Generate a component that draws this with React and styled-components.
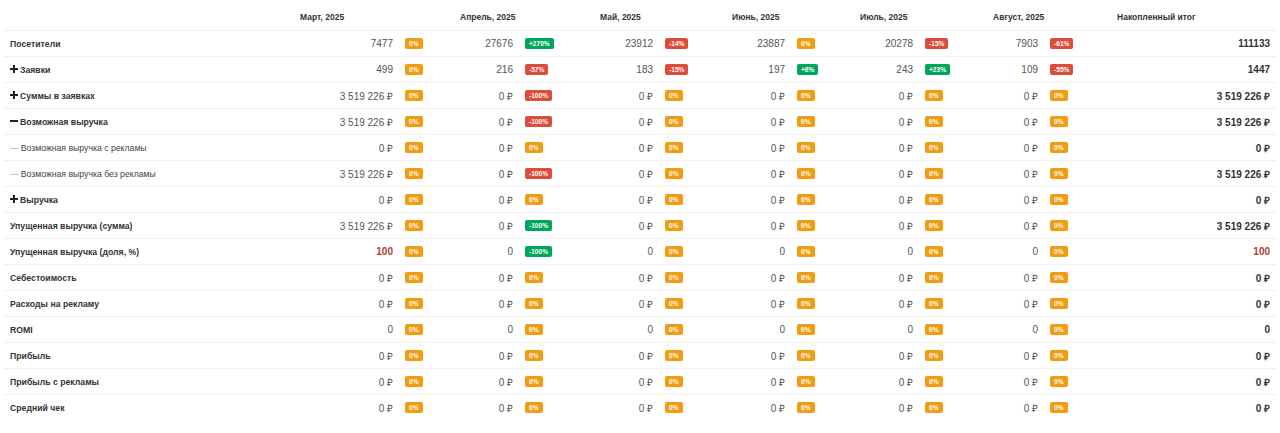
import React from "react";
import styled, { createGlobalStyle } from "styled-components";

const Global = createGlobalStyle`
  html, body { margin: 0; padding: 0; background: #fff; }
  body { font-family: "Liberation Sans", Arial, sans-serif; color: #333; }
`;

const Wrap = styled.div`
  padding: 4px;
`;

const Table = styled.table`
  width: 1272px;
  table-layout: fixed;
  border-collapse: collapse;
  font-size: 10px;
`;

const Th = styled.th`
  height: 26px;
  padding: 0 6px;
  text-align: left;
  font-weight: 700;
  font-size: 8.5px;
  color: #333;
  white-space: nowrap;
  border-bottom: 1px solid #f0f0f0;
  box-sizing: border-box;
`;

const Tr = styled.tr`
  & + & td { border-top: 1px solid #f0f0f0; }
`;

const Td = styled.td`
  height: 26px;
  padding: 1px 6px 0;
  box-sizing: border-box;
  vertical-align: middle;
  white-space: nowrap;
`;

const LabelCell = styled(Td)`
  font-size: 8.7px;
  font-weight: ${(p) => (p.$sub ? 400 : 700)};
  color: ${(p) => (p.$sub ? "#444" : "#333")};
`;

const ValueCell = styled(Td)`
  text-align: right;
  color: ${(p) => (p.$red ? "#b03a34" : "#555")};
  font-weight: ${(p) => (p.$red ? 700 : 400)};
`;

const BadgeCell = styled(Td)`
  text-align: left;
  padding-top: 0;
`;

const TotalCell = styled(Td)`
  text-align: right;
  font-weight: 700;
  color: ${(p) => (p.$red ? "#b03a34" : "#333")};
`;

const colors = { y: "#f39c12", r: "#dd4b39", g: "#00a65a" };

const Badge = styled.span`
  display: inline-block;
  background: ${(p) => colors[p.$c]};
  color: #fff;
  font-size: 6.6px;
  font-weight: 700;
  line-height: 11px;
  height: 11px;
  padding: 0 4px;
  border-radius: 2px;
  vertical-align: middle;
`;

const Dash = styled.span`
  color: #999;
  margin-right: 2px;
`;

const Icon = styled.svg`
  width: 8px;
  height: 8px;
  margin-right: 2px;
  vertical-align: -0.5px;
`;

const Plus = () => (
  <Icon viewBox="0 0 8 8">
    <path d="M3 0h2v3h3v2H5v3H3V5H0V3h3z" fill="#222" />
  </Icon>
);
const Minus = () => (
  <Icon viewBox="0 0 8 8">
    <path d="M0 3h8v2H0z" fill="#222" />
  </Icon>
);

const months = ["Март, 2025", "Апрель, 2025", "Май, 2025", "Июнь, 2025", "Июль, 2025", "Август, 2025"];
const widths = [290, 105, 55, 65, 75, 65, 67, 65, 63, 65, 68, 57, 67, 165];

const R = "0 ₽";
const Y = ["0%", "y"];
const zeroR = [[R, Y], [R, Y], [R, Y], [R, Y], [R, Y], [R, Y]];
const zero = [["0", Y], ["0", Y], ["0", Y], ["0", Y], ["0", Y], ["0", Y]];

const rows = [
  { label: "Посетители", cells: [["7477", Y], ["27676", ["+270%", "g"]], ["23912", ["-14%", "r"]], ["23887", Y], ["20278", ["-15%", "r"]], ["7903", ["-61%", "r"]]], total: "111133" },
  { label: "Заявки", icon: "plus", cells: [["499", Y], ["216", ["-57%", "r"]], ["183", ["-15%", "r"]], ["197", ["+8%", "g"]], ["243", ["+23%", "g"]], ["109", ["-55%", "r"]]], total: "1447" },
  { label: "Суммы в заявках", icon: "plus", cells: [["3 519 226 ₽", Y], [R, ["-100%", "r"]], [R, Y], [R, Y], [R, Y], [R, Y]], total: "3 519 226 ₽" },
  { label: "Возможная выручка", icon: "minus", cells: [["3 519 226 ₽", Y], [R, ["-100%", "r"]], [R, Y], [R, Y], [R, Y], [R, Y]], total: "3 519 226 ₽" },
  { label: "Возможная выручка с рекламы", sub: true, cells: zeroR, total: "0 ₽" },
  { label: "Возможная выручка без рекламы", sub: true, cells: [["3 519 226 ₽", Y], [R, ["-100%", "r"]], [R, Y], [R, Y], [R, Y], [R, Y]], total: "3 519 226 ₽" },
  { label: "Выручка", icon: "plus", cells: zeroR, total: "0 ₽" },
  { label: "Упущенная выручка (сумма)", cells: [["3 519 226 ₽", Y], [R, ["-100%", "g"]], [R, Y], [R, Y], [R, Y], [R, Y]], total: "3 519 226 ₽" },
  { label: "Упущенная выручка (доля, %)", red: true, cells: [["100", Y], ["0", ["-100%", "g"]], ["0", Y], ["0", Y], ["0", Y], ["0", Y]], total: "100" },
  { label: "Себестоимость", cells: zeroR, total: "0 ₽" },
  { label: "Расходы на рекламу", cells: zeroR, total: "0 ₽" },
  { label: "ROMI", cells: zero, total: "0" },
  { label: "Прибыль", cells: zeroR, total: "0 ₽" },
  { label: "Прибыль с рекламы", cells: zeroR, total: "0 ₽" },
  { label: "Средний чек", cells: zeroR, total: "0 ₽" },
];

export default function App() {
  return (
    <Wrap>
      <Global />
      <Table>
        <colgroup>
          {widths.map((w, i) => (
            <col key={i} style={{ width: w }} />
          ))}
        </colgroup>
        <thead>
          <tr>
            <Th />
            {months.map((m) => (
              <Th key={m} colSpan={2}>{m}</Th>
            ))}
            <Th>Накопленный итог</Th>
          </tr>
        </thead>
        <tbody>
          {rows.map((r) => (
            <Tr key={r.label}>
              <LabelCell $sub={r.sub}>
                {r.icon === "plus" && <Plus />}
                {r.icon === "minus" && <Minus />}
                {r.sub && <Dash>—</Dash>}
                {r.label}
              </LabelCell>
              {r.cells.map(([v, [b, c]], i) => (
                <React.Fragment key={i}>
                  <ValueCell $red={r.red && i === 0}>{v}</ValueCell>
                  <BadgeCell>
                    <Badge $c={c}>{b}</Badge>
                  </BadgeCell>
                </React.Fragment>
              ))}
              <TotalCell $red={r.red}>{r.total}</TotalCell>
            </Tr>
          ))}
        </tbody>
      </Table>
    </Wrap>
  );
}
